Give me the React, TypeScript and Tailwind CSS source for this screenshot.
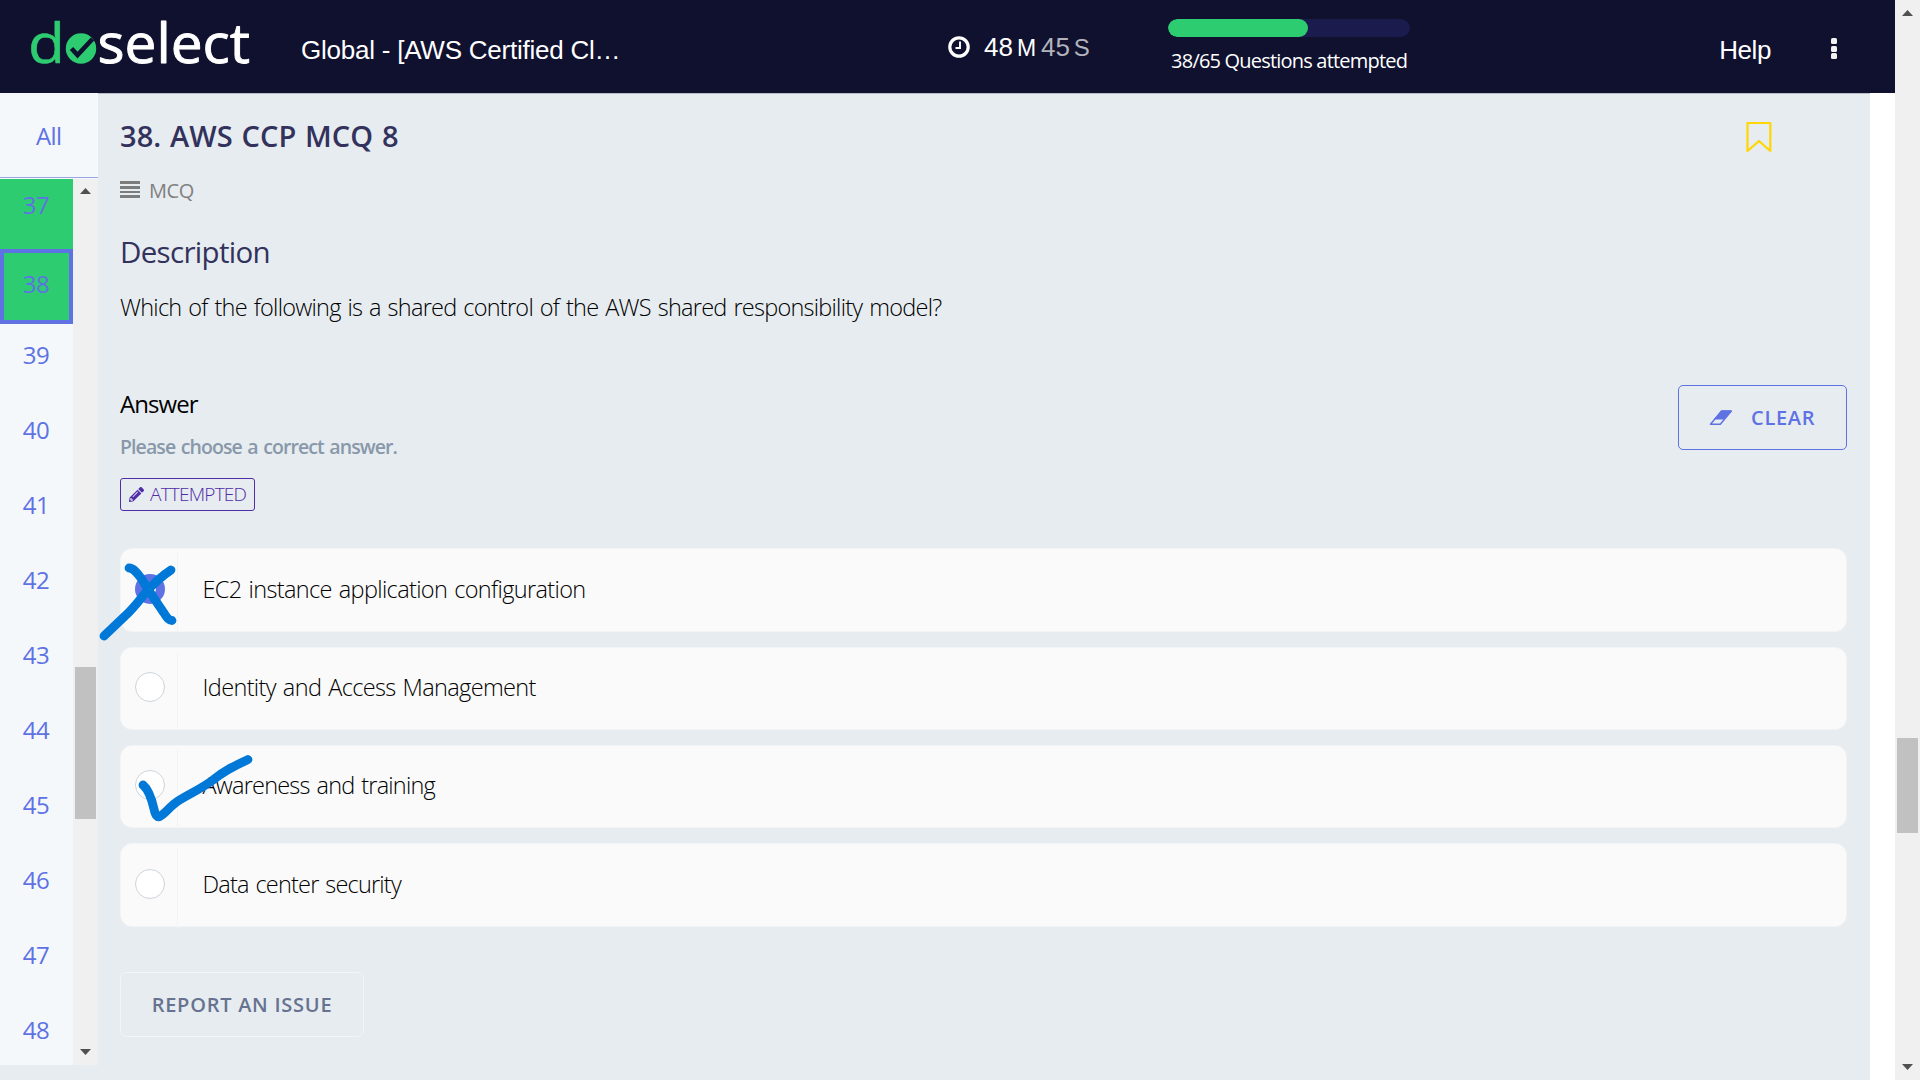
import type { ReactNode } from 'react';
import { FaPencilAlt } from 'react-icons/fa';

const questions = [38, 39, 40, 41, 42, 43, 44, 45, 46, 47, 48];

const options = [
  { label: 'EC2 instance application configuration', selected: true, tracking: 'tracking-[-0.64px]' },
  { label: 'Identity and Access Management', selected: false, tracking: 'tracking-[-0.64px]' },
  { label: 'Awareness and training', selected: false, tracking: 'tracking-[-0.79px]' },
  { label: 'Data center security', selected: false, tracking: 'tracking-[-0.8px]' },
];

function Logo() {
  return (
    <svg width="230" height="85" viewBox="25 0 230 85" className="block shrink-0">
      <text x="28" y="63" fontSize="55.5" fontFamily="Open Sans, sans-serif" fill="#2ecc71" stroke="#2ecc71" strokeWidth="0.5" strokeLinejoin="round" textLength="37" lengthAdjust="spacingAndGlyphs">
        d
      </text>
      <circle cx="81" cy="48.5" r="15.2" fill="#2ecc71" />
      <path d="M71.5 48.5 L77.5 55 L92.5 39" fill="none" stroke="#10112f" strokeWidth="4.6" />
      <text x="97.5" y="63" fontSize="55.5" fontFamily="Open Sans, sans-serif" fill="#fff" stroke="#fff" strokeWidth="0.9" strokeLinejoin="round" textLength="152.5" lengthAdjust="spacingAndGlyphs">
        select
      </text>
    </svg>
  );
}

function ClockIcon() {
  return (
    <svg width="22" height="22" viewBox="0 0 22 22" className="block shrink-0">
      <circle cx="11" cy="11" r="9.2" fill="none" stroke="#fff" strokeWidth="3.2" />
      <path d="M12 5.5V12H7.5" fill="none" stroke="#fff" strokeWidth="1.9" />
    </svg>
  );
}

function Header() {
  return (
    <header className="flex h-[93px] shrink-0 items-start bg-[#10112f] font-['Liberation_Sans',sans-serif] text-white">
      <div className="ml-[25px]">
        <Logo />
      </div>
      <div className="ml-[46px] mt-[34px] w-[325px] whitespace-nowrap text-[26px] leading-[32px] tracking-[-0.23px]">
        Global - [AWS Certified Cl…
      </div>
      <div className="ml-[322px] mt-[31px] flex h-8 items-baseline text-[26px] leading-8">
        <span className="relative top-[2px]">
          <ClockIcon />
        </span>
        <span className="ml-[14px]">48</span>
        <span className="ml-[4px] w-[24px] text-[23px]">M</span>
        <span className="text-[#b3b3bd]">45</span>
        <span className="ml-1 text-[24px] text-[#b3b3bd]">S</span>
      </div>
      <div className="ml-auto mr-[309px] mt-[19px] w-[242px]">
        <div className="h-[18px] overflow-hidden rounded-full bg-[#1b1b4d]">
          <div className="h-full w-[140px] rounded-full bg-[#2ecc71]" />
        </div>
        <div className="mt-[10px] whitespace-nowrap text-center font-['Open_Sans',sans-serif] text-[20px] leading-7 tracking-[-0.8px]">
          38/65 Questions attempted
        </div>
      </div>
      <div className="mt-[34px] text-[26px] leading-[32px] tracking-[-0.4px]">Help</div>
      <div className="ml-[60px] mr-[58px] mt-[38px] flex flex-col gap-[1.5px]">
        <span className="size-[6px] rounded-[1.5px] bg-[#f2f2f2]" />
        <span className="size-[6px] rounded-[1.5px] bg-[#f2f2f2]" />
        <span className="size-[6px] rounded-[1.5px] bg-[#f2f2f2]" />
      </div>
    </header>
  );
}

function Arrow({ down = false }: { down?: boolean }) {
  return (
    <svg width="11" height="6" viewBox="0 0 11 6" className="block">
      <path d={down ? 'M0 0H11L5.5 6Z' : 'M0 6H11L5.5 0Z'} fill="#505050" />
    </svg>
  );
}

function Sidebar() {
  return (
    <aside className="flex h-[972px] w-[98px] shrink-0 flex-col bg-[#f4f8fb] text-[24px] text-[#5e72e4]">
      <div className="h-[85px] border-b border-[#9aa6e6] pl-[36px] pt-[27px] leading-8 tracking-[-0.6px]">All</div>
      <div className="mt-px flex min-h-0 flex-1">
        <div className="w-[73px] overflow-hidden pr-px text-center tracking-[-0.5px]">
          <div className="-mr-px h-[70px] bg-[#2ecc71] pr-px pt-[10px] leading-8">37</div>
          {questions.map((n) =>
            n === 38 ? (
              <div key={n} className="-mr-px h-[75px] border-4 border-[#5e72e4] bg-[#2ecc71] pr-px pt-[15px] leading-8">
                {n}
              </div>
            ) : (
              <div key={n} className="h-[75px] pt-[15px] leading-8">
                {n}
              </div>
            ),
          )}
        </div>
        <div className="flex w-[25px] flex-col items-center bg-[#f0f0f0] pb-[10px] pt-[9px]">
          <Arrow />
          <div className="mt-[473px] h-[152px] w-[21px] bg-[#c1c1c1]" />
          <div className="mt-auto">
            <Arrow down />
          </div>
        </div>
      </div>
    </aside>
  );
}

function Option({ label, selected, tracking, children }: { label: string; selected: boolean; tracking: string; children?: ReactNode }) {
  return (
    <div className="relative flex h-[83.6px] rounded-[12px] border border-[#f3f4f5] bg-[#fafafa]">
      <div className="-mb-[2px] mt-1 flex w-[57px] border-r border-[#f2f3f4] pl-[14px] pt-[20.6px]">
        {selected ? (
          <span className="flex size-[30px] items-center justify-center rounded-full bg-[#5e72e4]">
            <span className="size-[12px] rounded-full bg-white" />
          </span>
        ) : (
          <span className="size-[30px] rounded-full border border-[#ced4da] bg-white" />
        )}
      </div>
      <div className={`ml-[24.5px] mt-[23.7px] whitespace-nowrap text-[23.5px] font-light leading-8 text-black [word-spacing:1.5px] ${tracking}`}>{label}</div>
      {children}
    </div>
  );
}

function CrossMark() {
  return (
    <svg width="90" height="90" viewBox="95 555 90 90" className="absolute left-[-26px] top-[6px]">
      <g fill="none" stroke="#0078d7" strokeWidth="8.8" strokeLinecap="round" strokeLinejoin="round">
        <path d="M129 568 C134 568 138 574 142 579.5 C148 590 158 604 164 613 C167 618 169 620.5 172 620.5" />
        <path d="M171 570 C162 576 155 582 146 592 C138 602 133 609 125 616 L104 636" />
      </g>
    </svg>
  );
}

function CheckMark() {
  return (
    <svg width="150" height="80" viewBox="120 750 150 80" className="absolute left-[-1px] top-[4px]">
      <path
        d="M143 785 C149 790 152 800 154 809 Q156 819 160.500 816 C166 813 170 806 178 801 C189 794 201 789 213 780 C225 770 236 765 248 759.500"
        fill="none"
        stroke="#0078d7"
        strokeWidth="8.8"
        strokeLinecap="round"
        strokeLinejoin="round"
      />
    </svg>
  );
}

function Question() {
  return (
    <main className="min-w-0 flex-1 border-t border-[#b9bec8] pl-[22px] pr-[23px] pt-[22px]">
      <div className="flex justify-between">
        <h1 className="text-[29px] font-semibold leading-10 tracking-[0.1px] text-[#32325d] [word-spacing:1px]">38. AWS CCP MCQ 8</h1>
        <svg width="28" height="32" viewBox="0 0 28 32" className="mr-[74px] mt-[5px]">
          <path d="M2.500 2H25.300V30L14 20L2.500 30Z" fill="none" stroke="#ffd600" strokeWidth="2.2" strokeLinejoin="round" />
        </svg>
      </div>
      <div className="mt-[21px] flex h-7 items-start text-[20px] leading-7 tracking-[-0.4px] text-[#808080]">
        <div className="mr-[9px] mt-[4px] flex w-5 flex-col gap-[2px]">
          <span className="h-[3px] bg-[#7c7c7c]" />
          <span className="h-[2.5px] bg-[#7c7c7c]" />
          <span className="h-[2.5px] bg-[#7c7c7c]" />
          <span className="h-[2.5px] bg-[#7c7c7c]" />
        </div>
        MCQ
      </div>
      <h2 className="mt-[27px] text-[29.5px] leading-10 tracking-[-0.68px] text-[#32325d]">Description</h2>
      <p className="mt-[19.4px] text-[23.5px] font-light leading-8 tracking-[-0.75px] text-black [word-spacing:1.5px]">
        Which of the following is a shared control of the AWS shared responsibility model?
      </p>
      <div className="mt-[61.6px] flex justify-between">
        <div className="pt-[3px]">
          <div className="text-[24px] leading-8 tracking-[-0.95px] text-black">Answer</div>
          <div className="mt-[13px] text-[19.5px] font-semibold leading-7 tracking-[-0.91px] text-[#8898aa] [word-spacing:1.3px]">Please choose a correct answer.</div>
          <div className="mt-[17px] flex h-[33px] w-[135px] items-center rounded-[3px] border border-[#512da8] pl-[8px] text-[19px] font-light leading-[31px] tracking-[-0.78px] text-[#512da8]">
            <FaPencilAlt className="mr-[6px] size-[15px] shrink-0" />
            ATTEMPTED
          </div>
        </div>
        <div className="flex h-[65px] w-[169px] items-center rounded-[5px] border border-[#5e72e4] pl-[30px] pt-[2px] text-[20px] font-semibold tracking-[0.7px] text-[#5e72e4]">
          <svg width="24" height="16" viewBox="0 0 24 16" className="mr-[18px]">
            <path d="M12.500 1H22.300L11.300 14.200H1.500Z" fill="none" stroke="#5e72e4" strokeWidth="1.500" strokeLinejoin="round" />
            <path d="M12.500 1H22.300L15.500 9H5.800Z" fill="#5e72e4" stroke="#5e72e4" strokeWidth="1" strokeLinejoin="round" />
          </svg>
          CLEAR
        </div>
      </div>
      <div className="mt-[37.4px] flex flex-col gap-[14.6px]">
        {options.map((o, i) => (
          <Option key={o.label} {...o}>
            {i === 0 && <CrossMark />}
            {i === 2 && <CheckMark />}
          </Option>
        ))}
      </div>
      <div className="mt-[45.4px] flex h-[65px] w-[244px] items-center justify-center rounded-[6px] border border-[#f3f5f7] pt-[2px] text-[20px] font-semibold tracking-[0.75px] text-[#66728f]">
        REPORT AN ISSUE
      </div>
    </main>
  );
}

export default function App() {
  return (
    <div className="flex h-[1080px] w-[1920px] overflow-hidden bg-white font-['Open_Sans','Noto_Sans',sans-serif]">
      <div className="flex w-[1895px] flex-col">
        <Header />
        <div className="mr-[25px] flex flex-1 bg-[#e7ecf0]">
          <Sidebar />
          <Question />
        </div>
      </div>
      <div className="flex w-[25px] flex-col items-center bg-[#f0f0f0] pb-[10px] pt-[10px]">
        <Arrow />
        <div className="mt-[722px] h-[95px] w-[21px] bg-[#c1c1c1]" />
        <div className="mt-auto">
          <Arrow down />
        </div>
      </div>
    </div>
  );
}
